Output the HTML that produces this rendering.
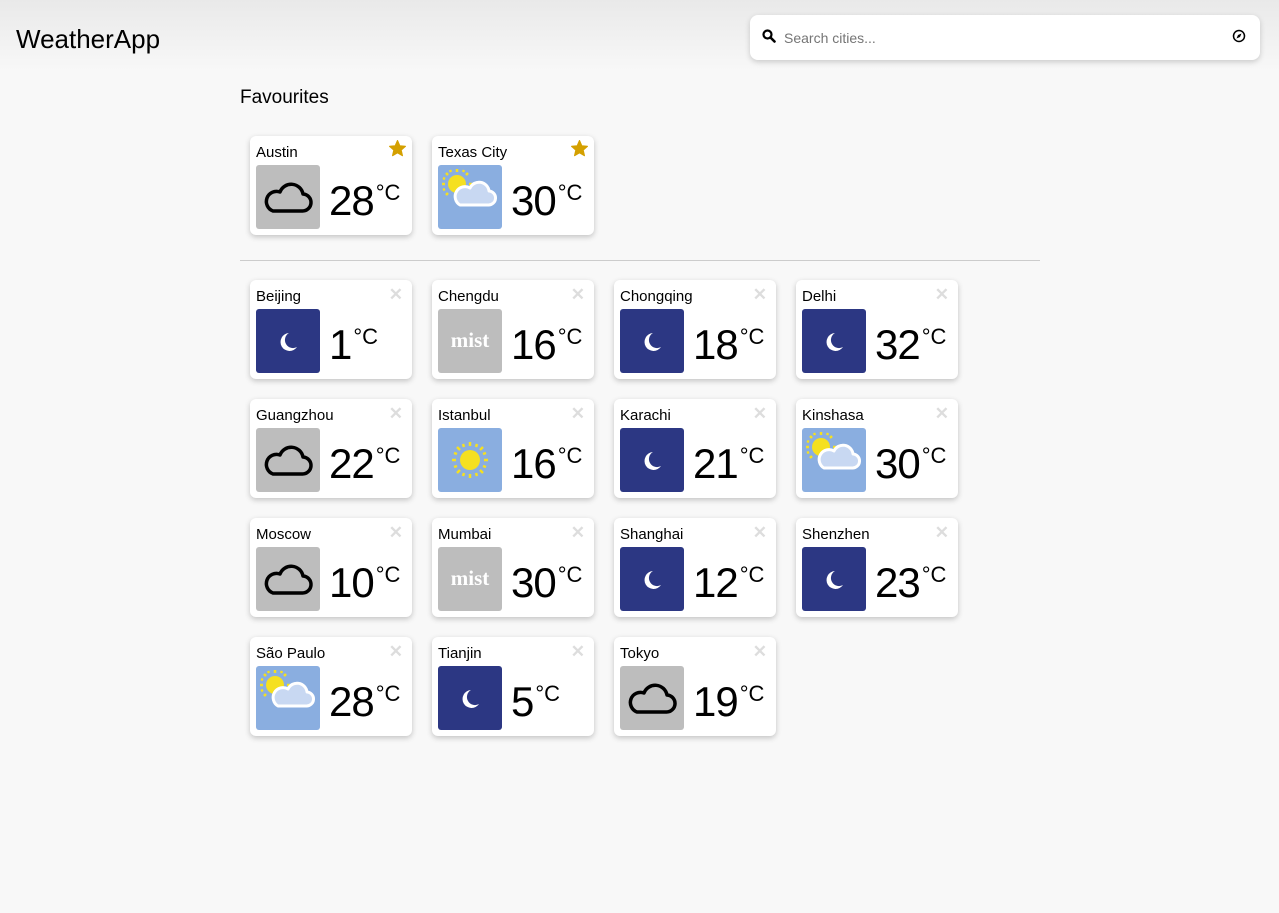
<!DOCTYPE html>
<html><head><meta charset="utf-8"><style>
*{box-sizing:border-box;margin:0;padding:0}
body{width:1279px;height:913px;background:#f8f8f8;font-family:"Liberation Sans",sans-serif;position:relative;overflow:hidden}
.hdr{position:absolute;left:0;top:0;width:1279px;height:72px;background:linear-gradient(#e9e9e9,#f8f8f8)}
.logo{position:absolute;left:16px;top:24px;font-size:26px;color:#000}
.search{position:absolute;left:750px;top:15px;width:510px;height:45px;background:#fff;border-radius:8px;box-shadow:0 2px 6px rgba(0,0,0,.18)}
.search .ph{position:absolute;left:34px;top:15px;font-size:14px;color:#757575}
h2{position:absolute;left:240px;top:87px;font-size:19px;font-weight:normal;color:#000}
.hr{position:absolute;left:240px;top:260px;width:800px;height:1px;background:#ccc}
.card{position:absolute;width:162px;height:99px;background:#fff;border-radius:6px;box-shadow:0 2px 6px rgba(0,0,0,.22)}
.card .n{position:absolute;left:6px;top:8px;font-size:15px;color:#000}
.card .x{position:absolute;right:9px;top:5px;font-size:17px;color:#ddd;font-weight:bold}
.card .st{position:absolute;right:5px;top:3px}
.card svg.i{position:absolute;left:6px;top:29px;width:64px;height:64px;border-radius:3px}
.card .t{position:absolute;left:79px;top:41px;font-size:42px;color:#000;letter-spacing:-1px}
.card .t sup{font-size:22px;position:relative;top:3px;vertical-align:top;letter-spacing:0;margin-left:2px}
</style></head><body>
<svg width="0" height="0" style="position:absolute">
<defs>
<symbol id="cloud" viewBox="0 0 64 64"><rect width="64" height="64" fill="#bdbdbd"/><path d="M17 46 H46 A8.5 8.5 0 0 0 47 29 A12 12 0 0 0 24 27 A9.5 9.5 0 0 0 17 46 Z" fill="none" stroke="#000" stroke-width="3.5" stroke-linejoin="round"/></symbol>
<symbol id="moon" viewBox="0 0 64 64"><rect width="64" height="64" fill="#2c3783"/><path d="M33 24 A9 9 0 1 0 41 38 A8 8 0 0 1 33 24 Z" fill="#fff"/></symbol>
<symbol id="mist" viewBox="0 0 64 64"><rect width="64" height="64" fill="#bdbdbd"/><text x="32" y="38" text-anchor="middle" font-family="Liberation Serif,serif" font-weight="bold" font-size="21" fill="#fff">mist</text></symbol>
<symbol id="part" viewBox="0 0 64 64"><rect width="64" height="64" fill="#8aaee0"/><g stroke="#f5e020" stroke-width="2.5"><line x1="19" y1="4" x2="19" y2="7"/><line x1="19" y1="31" x2="19" y2="34"/><line x1="4" y1="19" x2="7" y2="19"/><line x1="31" y1="19" x2="34" y2="19"/><line x1="8" y1="8" x2="10" y2="10"/><line x1="30" y1="8" x2="28" y2="10"/><line x1="8" y1="30" x2="10" y2="28"/><line x1="12" y1="5" x2="13" y2="7"/><line x1="26" y1="5" x2="25" y2="7"/><line x1="5" y1="13" x2="7" y2="14"/><line x1="5" y1="25" x2="7" y2="24"/></g><circle cx="19" cy="19" r="9" fill="#f5e020"/><path d="M22 40 H50 A7 7 0 0 0 51 26 A10 10 0 0 0 32 23 A8 8 0 0 0 22 40 Z" fill="#c8d8f2" stroke="#fff" stroke-width="3" stroke-linejoin="round"/></symbol>
<symbol id="sun" viewBox="0 0 64 64"><rect width="64" height="64" fill="#8aaee0"/><g stroke="#f5e020" stroke-width="2.5"><line x1="32" y1="14" x2="32" y2="18"/><line x1="32" y1="46" x2="32" y2="50"/><line x1="14" y1="32" x2="18" y2="32"/><line x1="46" y1="32" x2="50" y2="32"/><line x1="19" y1="19" x2="22" y2="22"/><line x1="45" y1="19" x2="42" y2="22"/><line x1="19" y1="45" x2="22" y2="42"/><line x1="45" y1="45" x2="42" y2="42"/><line x1="25" y1="16" x2="26" y2="19"/><line x1="39" y1="16" x2="38" y2="19"/><line x1="25" y1="48" x2="26" y2="45"/><line x1="39" y1="48" x2="38" y2="45"/><line x1="16" y1="25" x2="19" y2="26"/><line x1="16" y1="39" x2="19" y2="38"/><line x1="48" y1="25" x2="45" y2="26"/><line x1="48" y1="39" x2="45" y2="38"/></g><circle cx="32" cy="32" r="10" fill="#f5e020"/></symbol>
<symbol id="star" viewBox="0 0 24 24"><path d="M12 2 L14.9 8.6 L22 9.3 L16.6 14 L18.2 21 L12 17.3 L5.8 21 L7.4 14 L2 9.3 L9.1 8.6 Z" fill="#d4a000" stroke="#d4a000" stroke-width="1.5" stroke-linejoin="round"/></symbol>
</defs></svg>
<div class="hdr"></div>
<div class="logo">WeatherApp</div>
<div class="search">
<svg style="position:absolute;left:12px;top:14px" width="14" height="14" viewBox="0 0 14 14"><circle cx="5.5" cy="5.5" r="4" fill="none" stroke="#000" stroke-width="2.2"/><line x1="8.5" y1="8.5" x2="12.5" y2="12.5" stroke="#000" stroke-width="2.6" stroke-linecap="round"/></svg>
<div class="ph">Search cities...</div>
<svg style="position:absolute;left:482px;top:14px" width="14" height="14" viewBox="0 0 14 14"><circle cx="7" cy="7" r="5.5" fill="none" stroke="#000" stroke-width="1.5"/><path d="M9.5 4.5 L8 8 L4.5 9.5 L6 6 Z" fill="#000"/></svg>
</div>
<h2>Favourites</h2>

<div class="card" style="left:250px;top:136px"><div class="n">Austin</div><svg class="st" width="19" height="19"><use href="#star"/></svg><svg class="i"><use href="#cloud"/></svg><div class="t">28<sup>°C</sup></div></div>
<div class="card" style="left:432px;top:136px"><div class="n">Texas City</div><svg class="st" width="19" height="19"><use href="#star"/></svg><svg class="i"><use href="#part"/></svg><div class="t">30<sup>°C</sup></div></div>

<div class="hr"></div>

<div class="card" style="left:250px;top:280px"><div class="n">Beijing</div><div class="x">✕</div><svg class="i"><use href="#moon"/></svg><div class="t">1<sup>°C</sup></div></div>
<div class="card" style="left:432px;top:280px"><div class="n">Chengdu</div><div class="x">✕</div><svg class="i"><use href="#mist"/></svg><div class="t">16<sup>°C</sup></div></div>
<div class="card" style="left:614px;top:280px"><div class="n">Chongqing</div><div class="x">✕</div><svg class="i"><use href="#moon"/></svg><div class="t">18<sup>°C</sup></div></div>
<div class="card" style="left:796px;top:280px"><div class="n">Delhi</div><div class="x">✕</div><svg class="i"><use href="#moon"/></svg><div class="t">32<sup>°C</sup></div></div>

<div class="card" style="left:250px;top:399px"><div class="n">Guangzhou</div><div class="x">✕</div><svg class="i"><use href="#cloud"/></svg><div class="t">22<sup>°C</sup></div></div>
<div class="card" style="left:432px;top:399px"><div class="n">Istanbul</div><div class="x">✕</div><svg class="i"><use href="#sun"/></svg><div class="t">16<sup>°C</sup></div></div>
<div class="card" style="left:614px;top:399px"><div class="n">Karachi</div><div class="x">✕</div><svg class="i"><use href="#moon"/></svg><div class="t">21<sup>°C</sup></div></div>
<div class="card" style="left:796px;top:399px"><div class="n">Kinshasa</div><div class="x">✕</div><svg class="i"><use href="#part"/></svg><div class="t">30<sup>°C</sup></div></div>

<div class="card" style="left:250px;top:518px"><div class="n">Moscow</div><div class="x">✕</div><svg class="i"><use href="#cloud"/></svg><div class="t">10<sup>°C</sup></div></div>
<div class="card" style="left:432px;top:518px"><div class="n">Mumbai</div><div class="x">✕</div><svg class="i"><use href="#mist"/></svg><div class="t">30<sup>°C</sup></div></div>
<div class="card" style="left:614px;top:518px"><div class="n">Shanghai</div><div class="x">✕</div><svg class="i"><use href="#moon"/></svg><div class="t">12<sup>°C</sup></div></div>
<div class="card" style="left:796px;top:518px"><div class="n">Shenzhen</div><div class="x">✕</div><svg class="i"><use href="#moon"/></svg><div class="t">23<sup>°C</sup></div></div>

<div class="card" style="left:250px;top:637px"><div class="n">São Paulo</div><div class="x">✕</div><svg class="i"><use href="#part"/></svg><div class="t">28<sup>°C</sup></div></div>
<div class="card" style="left:432px;top:637px"><div class="n">Tianjin</div><div class="x">✕</div><svg class="i"><use href="#moon"/></svg><div class="t">5<sup>°C</sup></div></div>
<div class="card" style="left:614px;top:637px"><div class="n">Tokyo</div><div class="x">✕</div><svg class="i"><use href="#cloud"/></svg><div class="t">19<sup>°C</sup></div></div>
</body></html>
